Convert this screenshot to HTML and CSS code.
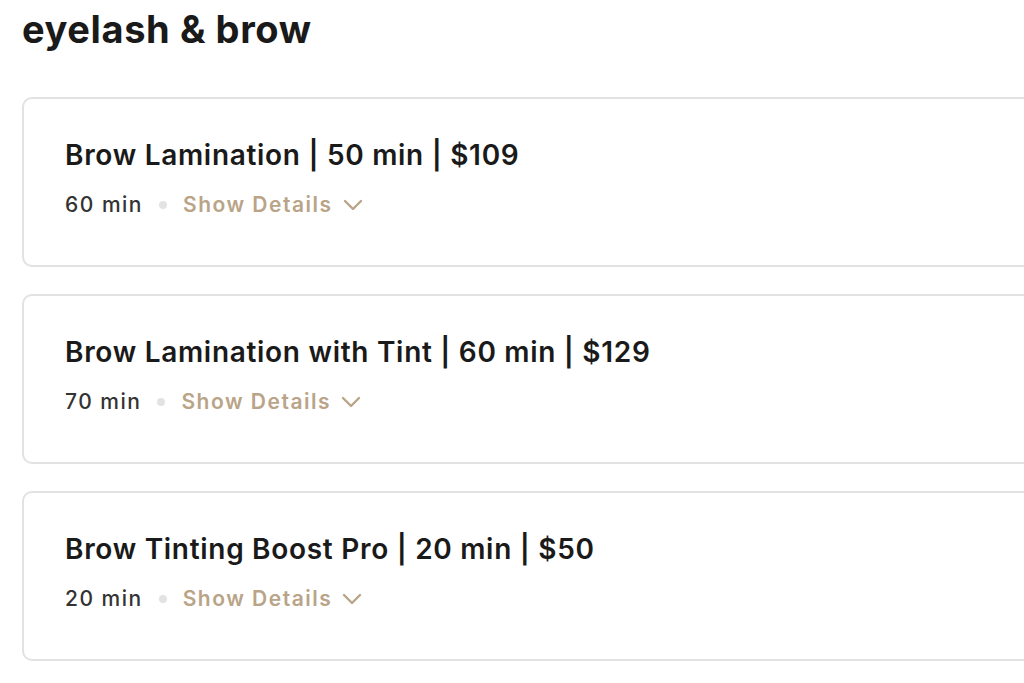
FILE: index.html
```html
<!DOCTYPE html>
<html lang="en">
<head>
    <meta charset="UTF-8">
    <title>eyelash &amp; brow</title>
    <link rel="stylesheet" href="styles.css">
</head>
<body>
    <div class="section">
        <h2 class="section-title">eyelash &amp; brow</h2>
        <div class="service-list">
            <div class="service">
                <h3 class="service-name">Brow Lamination | 50 min | $109</h3>
                <div class="service-meta">
                    <span class="duration">60 min</span>
                    <span class="dot"></span>
                    <a class="details" href="#">Show Details
                        <svg width="20" height="12" viewBox="0 0 20 12"><path d="M2 2l8 8 8-8" fill="none" stroke="currentColor" stroke-width="2.4" stroke-linecap="round" stroke-linejoin="round"/></svg>
                    </a>
                </div>
            </div>
            <div class="service">
                <h3 class="service-name">Brow Lamination with Tint | 60 min | $129</h3>
                <div class="service-meta">
                    <span class="duration">70 min</span>
                    <span class="dot"></span>
                    <a class="details" href="#">Show Details
                        <svg width="20" height="12" viewBox="0 0 20 12"><path d="M2 2l8 8 8-8" fill="none" stroke="currentColor" stroke-width="2.4" stroke-linecap="round" stroke-linejoin="round"/></svg>
                    </a>
                </div>
            </div>
            <div class="service">
                <h3 class="service-name">Brow Tinting Boost Pro | 20 min | $50</h3>
                <div class="service-meta">
                    <span class="duration">20 min</span>
                    <span class="dot"></span>
                    <a class="details" href="#">Show Details
                        <svg width="20" height="12" viewBox="0 0 20 12"><path d="M2 2l8 8 8-8" fill="none" stroke="currentColor" stroke-width="2.4" stroke-linecap="round" stroke-linejoin="round"/></svg>
                    </a>
                </div>
            </div>
        </div>
    </div>
</body>
</html>
```

FILE: styles.css
```css
body {
    margin: 0;
    background-color: #fff;
    font-family: Inter, "Noto Sans", sans-serif;
    color: #1a1a1a;
    overflow: hidden;
}
.section {
    padding: 0 0 0 22px;
}
.section-title {
    margin: 0;
    padding-top: 7px;
    font-size: 38px;
    font-weight: 700;
    line-height: 44px;
    letter-spacing: 0.6px;
    color: #1a1a1a;
}
.service-list {
    display: flex;
    flex-direction: column;
    gap: 27px;
    margin-top: 46px;
    width: 1040px;
}
.service {
    height: 170px;
    box-sizing: border-box;
    border: 2px solid #e2e2e2;
    border-radius: 10px;
    padding: 38px 0 0 41px;
}
.service-name {
    margin: 0;
    font-size: 28px;
    font-weight: 600;
    line-height: 36px;
    letter-spacing: 0.7px;
}
.service-meta {
    display: flex;
    align-items: center;
    margin-top: 19px;
    font-size: 21px;
    font-weight: 500;
    letter-spacing: 1.5px;
}
.duration {
    color: #333;
}
.dot {
    width: 8px;
    height: 8px;
    border-radius: 50%;
    background-color: #e3e3e3;
    margin: 0 16px;
}
.details {
    display: flex;
    align-items: center;
    gap: 10px;
    color: #b9a488;
    font-weight: 600;
    text-decoration: none;
}
```
